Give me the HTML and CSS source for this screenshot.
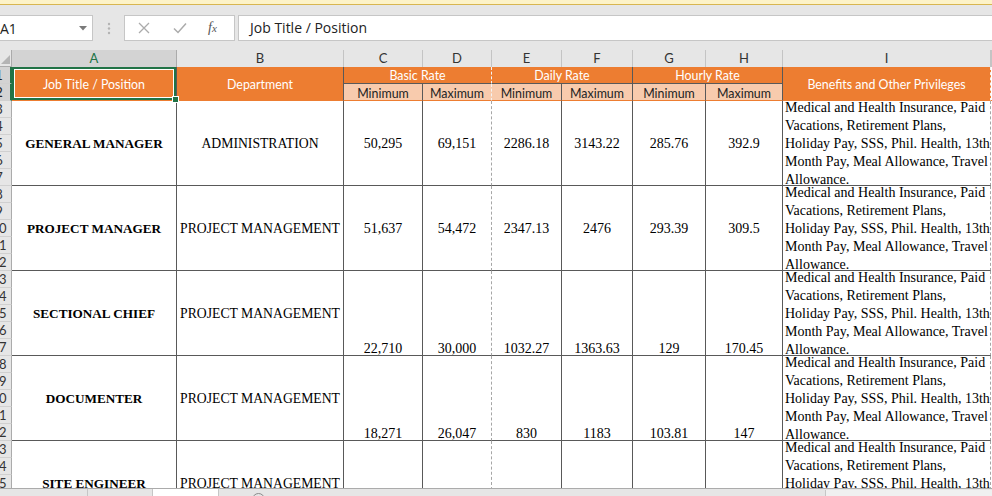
FILE: index.html
```html
<!DOCTYPE html>
<html>
<head>
<meta charset="utf-8">
<title>Sheet</title>
<link rel="stylesheet" href="styles.css">
</head>
<body>
<div class="app">
  <div class="msgbar"></div>
  <div class="fbar">
    <div class="namebox">
      <span class="ref">A1</span>
      <svg class="dd" width="8" height="5" viewBox="0 0 8 5"><path d="M0 0H8L4 4.5Z" fill="#7a7a7a"/></svg>
    </div>
    <svg class="grip" width="4" height="13" viewBox="0 0 4 13"><circle cx="2" cy="2" r="1.2" fill="#b3b3b3"/><circle cx="2" cy="6.5" r="1.2" fill="#b3b3b3"/><circle cx="2" cy="11" r="1.2" fill="#b3b3b3"/></svg>
    <div class="fbtns">
      <svg class="ico" width="12" height="12" viewBox="0 0 12 12"><path d="M1 1L11 11M11 1L1 11" stroke="#ababab" stroke-width="1.3" fill="none"/></svg>
      <svg class="ico chk" width="14" height="12" viewBox="0 0 14 12"><path d="M1 6.5L5 10.5L13 1.5" stroke="#ababab" stroke-width="1.5" fill="none"/></svg>
      <span class="fx">f<small>x</small></span>
    </div>
    <div class="finput">Job Title / Position</div>
  </div>

  <div class="sheet">
    <div class="corner"><svg width="9" height="9" viewBox="0 0 9 9"><path d="M9 0V9H0Z" fill="#b4b4b4"/></svg></div>
    <div class="colhdrs">
      <div class="ch sel">A</div>
      <div class="ch">B</div>
      <div class="ch">C</div>
      <div class="ch">D</div>
      <div class="ch">E</div>
      <div class="ch">F</div>
      <div class="ch">G</div>
      <div class="ch">H</div>
      <div class="ch">I</div>
      <div class="ch"></div>
    </div>
    <div class="rowhdrs">
      <div class="rh sel"><span>1</span></div>
      <div class="rh sel"><span>2</span></div>
      <div class="rh"><span>3</span></div>
      <div class="rh"><span>4</span></div>
      <div class="rh"><span>5</span></div>
      <div class="rh"><span>6</span></div>
      <div class="rh"><span>7</span></div>
      <div class="rh"><span>8</span></div>
      <div class="rh"><span>9</span></div>
      <div class="rh"><span>10</span></div>
      <div class="rh"><span>11</span></div>
      <div class="rh"><span>12</span></div>
      <div class="rh"><span>13</span></div>
      <div class="rh"><span>14</span></div>
      <div class="rh"><span>15</span></div>
      <div class="rh"><span>16</span></div>
      <div class="rh"><span>17</span></div>
      <div class="rh"><span>18</span></div>
      <div class="rh"><span>19</span></div>
      <div class="rh"><span>20</span></div>
      <div class="rh"><span>21</span></div>
      <div class="rh"><span>22</span></div>
      <div class="rh"><span>23</span></div>
      <div class="rh"><span>24</span></div>
      <div class="rh"><span>25</span></div>
      <div class="rh"><span>26</span></div>
    </div>
    <div class="cells">
      <div class="hd r2 sel">Job Title / Position</div>
      <div class="hd r2">Department</div>
      <div class="hd c2 pb">Basic Rate</div>
      <div class="hd c2">Daily Rate</div>
      <div class="hd c2">Hourly Rate</div>
      <div class="hd r2 pbi">Benefits and Other Privileges</div>
      <div class="hd r2 blank"></div>
      <div class="sub">Minimum</div>
      <div class="sub pb">Maximum</div>
      <div class="sub">Minimum</div>
      <div class="sub">Maximum</div>
      <div class="sub">Minimum</div>
      <div class="sub">Maximum</div>

      <div class="c b">GENERAL MANAGER</div>
      <div class="c d">ADMINISTRATION</div>
      <div class="c">50,295</div>
      <div class="c pb">69,151</div>
      <div class="c">2286.18</div>
      <div class="c">3143.22</div>
      <div class="c">285.76</div>
      <div class="c">392.9</div>
      <div class="c ben"><p>Medical and Health Insurance, Paid<br>Vacations, Retirement Plans,<br>Holiday Pay, SSS, Phil. Health, 13th<br>Month Pay, Meal Allowance, Travel<br>Allowance.</p></div>
      <div class="c blank"></div>

      <div class="c b">PROJECT MANAGER</div>
      <div class="c d">PROJECT MANAGEMENT</div>
      <div class="c">51,637</div>
      <div class="c pb">54,472</div>
      <div class="c">2347.13</div>
      <div class="c">2476</div>
      <div class="c">293.39</div>
      <div class="c">309.5</div>
      <div class="c ben"><p>Medical and Health Insurance, Paid<br>Vacations, Retirement Plans,<br>Holiday Pay, SSS, Phil. Health, 13th<br>Month Pay, Meal Allowance, Travel<br>Allowance.</p></div>
      <div class="c blank"></div>

      <div class="c b">SECTIONAL CHIEF</div>
      <div class="c d">PROJECT MANAGEMENT</div>
      <div class="c bot">22,710</div>
      <div class="c bot pb">30,000</div>
      <div class="c bot">1032.27</div>
      <div class="c bot">1363.63</div>
      <div class="c bot">129</div>
      <div class="c bot">170.45</div>
      <div class="c ben"><p>Medical and Health Insurance, Paid<br>Vacations, Retirement Plans,<br>Holiday Pay, SSS, Phil. Health, 13th<br>Month Pay, Meal Allowance, Travel<br>Allowance.</p></div>
      <div class="c blank"></div>

      <div class="c b">DOCUMENTER</div>
      <div class="c d">PROJECT MANAGEMENT</div>
      <div class="c bot">18,271</div>
      <div class="c bot pb">26,047</div>
      <div class="c bot">830</div>
      <div class="c bot">1183</div>
      <div class="c bot">103.81</div>
      <div class="c bot">147</div>
      <div class="c ben"><p>Medical and Health Insurance, Paid<br>Vacations, Retirement Plans,<br>Holiday Pay, SSS, Phil. Health, 13th<br>Month Pay, Meal Allowance, Travel<br>Allowance.</p></div>
      <div class="c blank"></div>

      <div class="c b">SITE ENGINEER</div>
      <div class="c d">PROJECT MANAGEMENT</div>
      <div class="c"></div>
      <div class="c pb"></div>
      <div class="c"></div>
      <div class="c"></div>
      <div class="c"></div>
      <div class="c"></div>
      <div class="c ben"><p>Medical and Health Insurance, Paid<br>Vacations, Retirement Plans,<br>Holiday Pay, SSS, Phil. Health, 13th<br>Month Pay, Meal Allowance, Travel<br>Allowance.</p></div>
      <div class="c blank"></div>
    </div>
  </div>

  <div class="tabs">
    <div class="nav1"></div>
    <div class="nav2"></div>
    <div class="tab"></div>
    <div class="newarea"><span class="plus"></span></div>
    <div class="hscroll"></div>
  </div>
</div>
</body>
</html>
```
FILE: styles.css
```css
html, body {
  margin: 0;
  padding: 0;
}
body {
  background: #e6e6e6;
  font-family: "Liberation Serif", "Times New Roman", serif;
}
.app {
  width: 992px;
  height: 496px;
  overflow: hidden;
  display: flex;
  flex-direction: column;
}
.msgbar {
  flex: none;
  height: 4px;
  background: #fdf3c8;
  border-bottom: 1px solid #d8b650;
}
.fbar {
  flex: none;
  height: 45px;
  box-sizing: border-box;
  padding-top: 10px;
  display: flex;
  align-items: flex-start;
}
.namebox {
  width: 99px;
  margin-left: -6px;
  height: 26px;
  box-sizing: border-box;
  background: #fff;
  border: 1px solid #c6c6c6;
  display: flex;
  align-items: center;
  padding-left: 5px;
  padding-right: 5px;
  font: 14px "Open Sans", sans-serif;
  color: #222;
}
.namebox .dd {
  margin-left: auto;
  margin-top: 1px;
}
.grip {
  margin: 7px 13px 0 14px;
}
.fbtns {
  width: 111px;
  height: 26px;
  box-sizing: border-box;
  background: #fff;
  border: 1px solid #c6c6c6;
  display: flex;
  align-items: center;
  padding-left: 13px;
}
.fbtns .chk {
  margin-left: 23px;
}
.fx {
  margin-left: 21px;
  font: italic 14px "Liberation Serif", serif;
  color: #555;
}
.fx small {
  font-size: 11px;
}
.finput {
  flex: 1;
  margin-left: 3px;
  margin-right: -3px;
  height: 26px;
  box-sizing: border-box;
  background: #fff;
  border: 1px solid #c6c6c6;
  padding-left: 11px;
  font: 14px "Open Sans", sans-serif;
  line-height: 24px;
  color: #222;
}

/* sheet */
.sheet {
  --cols: 165px 167px 79px 69px 70px 71px 73px 77px 208px 1fr;
  flex: none;
  height: 438px;
  overflow: hidden;
  background: #fff;
  display: grid;
  grid-template-columns: 12px 1fr;
  grid-template-rows: 17px 1fr;
}
.corner {
  background: #e6e6e6;
  border-right: 1px solid #ababab;
  border-bottom: 1px solid #ababab;
  box-sizing: border-box;
  display: flex;
  align-items: flex-end;
  justify-content: flex-end;
  padding: 0 1px 2px 0;
}
.colhdrs {
  display: grid;
  grid-template-columns: var(--cols);
}
.ch {
  box-sizing: border-box;
  background: #e6e6e6;
  border-right: 1px solid #c4c4c4;
  border-bottom: 1px solid #ababab;
  font: 13px "Lato", sans-serif;
  line-height: 17px;
  text-align: center;
  color: #333;
}
.ch.sel {
  background: #d3d3d3;
  color: #217346;
  border-bottom: 2px solid #217346;
  border-right-color: #ababab;
}
.rowhdrs {
  display: flex;
  flex-direction: column;
}
.rh {
  flex: none;
  height: 17px;
  box-sizing: border-box;
  background: #e6e6e6;
  border-right: 1px solid #ababab;
  border-bottom: 1px solid #d0d0d0;
  overflow: hidden;
  font: 13px "Lato", sans-serif;
  line-height: 16px;
  color: #333;
}
.rh span {
  display: block;
  width: 26px;
  margin-left: -14px;
  text-align: center;
}
.rh.sel {
  background: #d3d3d3;
  color: #222;
  border-right: 2px solid #217346;
}

.cells {
  align-self: start;
  display: grid;
  grid-template-columns: var(--cols);
  grid-template-rows: 17px 17px repeat(5, 85px);
}
.hd, .sub {
  box-sizing: border-box;
  display: flex;
  align-items: center;
  justify-content: center;
  font: 12.4px "Lato", sans-serif;
  white-space: nowrap;
  border-right: 1px solid #595959;
  padding-top: 2px;
}
.hd {
  background: #ed7d31;
  color: #fff;
}
.hd.r2 {
  grid-row: span 2;
  border-bottom: 1px solid #ed7d31;
}
.hd.c2 {
  grid-column: span 2;
  border-bottom: 1px solid #595959;
  line-height: 16px;
}
.hd.pb, .sub.pb {
  border-right: 1px dashed #f4f4f4;
}
.hd.pbi {
  border-right: 1px dashed #f4f4f4;
}
.hd.blank {
  background: #fff;
  border-right: none;
}
.sub {
  background: #f8cbad;
  color: #222;
  border-bottom: 1px solid #ed7d31;
}
.hd.sel {
  position: relative;
  box-shadow: inset 0 0 0 2px #217346, inset 0 0 0 3px #fff;
}
.hd.sel::after {
  content: "";
  position: absolute;
  right: -3px;
  bottom: -3px;
  width: 5px;
  height: 5px;
  background: #217346;
  border: 1px solid #fff;
  z-index: 2;
}

.c {
  box-sizing: border-box;
  border-right: 1px solid #595959;
  border-bottom: 1px solid #595959;
  display: flex;
  align-items: center;
  justify-content: center;
  font-size: 14px;
  line-height: 16px;
  padding-top: 2px;
  color: #000;
  white-space: nowrap;
  overflow: hidden;
}
.c.d {
  font-size: 13.7px;
}
.c.b {
  font-weight: bold;
  font-size: 13.2px;
}
.c.bot {
  align-items: flex-end;
  padding-bottom: 0;
  line-height: 13px;
}
.c.pb {
  border-right: 1px dashed #a6a6a6;
}
.c.ben {
  justify-content: flex-start;
  padding-left: 2px;
  border-right: 1px dashed #a6a6a6;
}
.c.ben p {
  margin: 0;
  line-height: 18px;
}
.c.blank {
  border: none;
}

/* bottom tabs */
.tabs {
  flex: none;
  height: 8px;
  box-sizing: border-box;
  display: flex;
  background: #e6e6e6;
  border-top: 1px solid #ababab;
  overflow: hidden;
}
.nav1 {
  width: 87px;
  border-right: 1px solid #c6c6c6;
}
.nav2 {
  width: 64px;
  border-right: 1px solid #c6c6c6;
}
.tab {
  width: 65px;
  background: #fff;
}
.newarea {
  width: 606px;
  border-left: 1px solid #c6c6c6;
}
.plus {
  display: block;
  width: 13px;
  height: 13px;
  box-sizing: border-box;
  margin: 4px 0 0 33px;
  border: 1px solid #8a8a8a;
  border-radius: 50%;
}
.hscroll {
  flex: 1;
  background: #f0f0f0;
  border-left: 1px solid #c6c6c6;
  margin-top: 1px;
}
```
